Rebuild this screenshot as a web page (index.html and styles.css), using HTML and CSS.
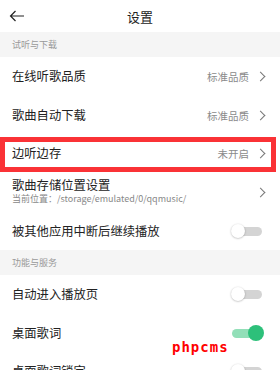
FILE: index.html
```html
<!DOCTYPE html>
<html lang="zh">
<head>
<meta charset="utf-8">
<link rel="stylesheet" href="styles.css">
</head>
<body>
<div class="page">
  <header class="topbar">
    <svg class="back" width="16" height="12" viewBox="0 0 16 12"><path d="M15 6H1.5M6.5 1L1.5 6l5 5" fill="none" stroke="#222" stroke-width="1.2"/></svg>
    <div class="title">设置</div>
  </header>

  <div class="section">试听与下载</div>
  <div class="row r39"><span class="label">在线听歌品质</span><span class="value">标准品质</span><span class="chev"></span></div>
  <div class="row r38"><span class="label">歌曲自动下载</span><span class="value">标准品质</span><span class="chev"></span></div>
  <div class="row r39"><span class="label">边听边存</span><span class="value">未开启</span><span class="chev"></span></div>
  <div class="row r39 two">
    <div class="col"><span class="label">歌曲存储位置设置</span><span class="sub">当前位置：/storage/emulated/0/qqmusic/</span></div>
    <span class="chev"></span>
  </div>
  <div class="row r38"><span class="label">被其他应用中断后继续播放</span><span class="toggle"></span></div>

  <div class="section">功能与服务</div>
  <div class="row r39"><span class="label">自动进入播放页</span><span class="toggle"></span></div>
  <div class="row r38"><span class="label">桌面歌词</span><span class="toggle on"></span></div>
  <div class="row r38"><span class="label">桌面歌词锁定</span><span class="toggle"></span></div>

  <div class="highlight"></div>
  <div class="watermark">phpcms</div>
</div>
</body>
</html>
```
FILE: styles.css
```css
* { box-sizing: border-box; }
html, body { margin: 0; padding: 0; background: #fff; }
body {
  font-family: "Noto Sans CJK SC", "Noto Sans", sans-serif;
  color: #222;
  width: 280px;
  height: 370px;
  overflow: hidden;
}
.page { position: relative; width: 280px; height: 370px; overflow: hidden; }
.topbar {
  height: 32px;
  display: flex;
  align-items: center;
  justify-content: center;
  position: relative;
}
.back { position: absolute; left: 9px; top: 10px; }
.title { font-size: 13px; color: #222; line-height: 1; }
.section {
  height: 25px;
  background: #f5f5f5;
  color: #999;
  font-size: 9px;
  display: flex;
  align-items: center;
  padding-left: 12px;
}
.row {
  display: flex;
  align-items: center;
  padding: 0 14px 0 12px;
}
.r39 { height: 39px; }
.r38 { height: 38px; }
.label { font-size: 12.3px; color: #222; flex: 1; line-height: 1.2; }
.value { font-size: 10.5px; color: #8a8a8a; margin-right: 8px; }
.chev {
  width: 7px; height: 7px;
  border-top: 1.1px solid #777;
  border-right: 1.1px solid #777;
  transform: rotate(45deg);
  margin-right: 2px;
}
.two .col { flex: 1; display: flex; flex-direction: column; gap: 2px; margin-top: -2px; }
.sub { font-size: 9px; color: #888; line-height: 1.2; }
.toggle {
  position: relative;
  width: 30px; height: 9px;
  border-radius: 5px;
  background: #d4d4d4;
  margin-right: 4px;
}
.toggle::after {
  content: "";
  position: absolute;
  left: -1px; top: -3px;
  width: 14px; height: 14px;
  border-radius: 50%;
  background: #fff;
  box-shadow: 0 0.5px 2px rgba(0,0,0,0.3);
}
.toggle.on { background: #92dfb8; }
.toggle.on::after {
  left: auto; right: -2px; top: -4px;
  width: 16px; height: 16px;
  background: #2dc07a;
  box-shadow: none;
}
.highlight {
  position: absolute;
  left: 0; top: 137px;
  width: 276px; height: 35px;
  border: 5px solid #fa3236;
}
.watermark {
  position: absolute;
  left: 172px; top: 339px;
  font-family: "DejaVu Sans Mono", monospace;
  font-weight: bold;
  font-size: 14px;
  color: #ff0000;
  letter-spacing: 1px;
}
```
